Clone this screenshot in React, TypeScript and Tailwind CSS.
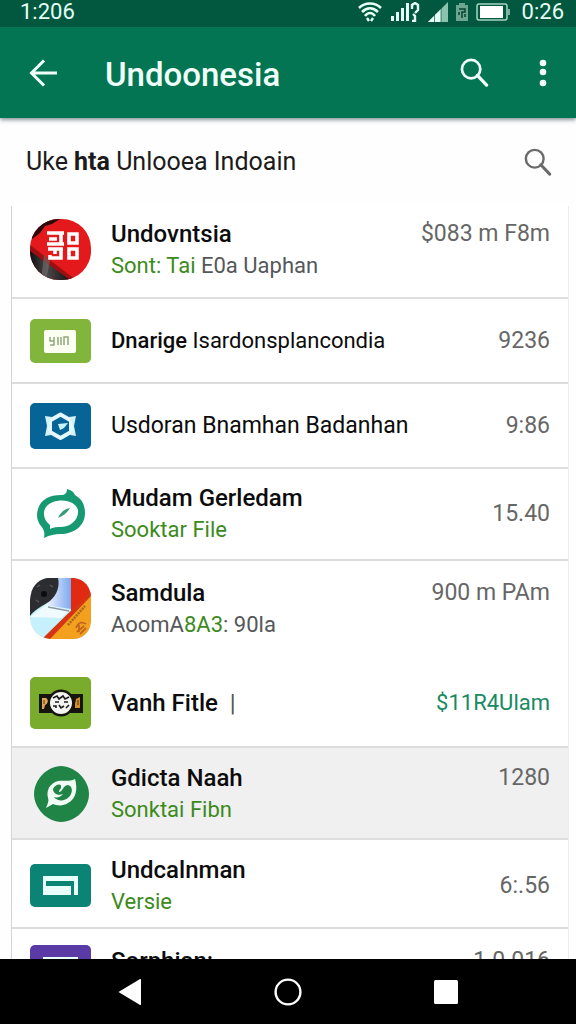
import { type ReactNode } from "react";
import clsx from "clsx";

type Part = { text: string; className?: string };

type Item = {
  id: string;
  icon: ReactNode;
  title: Part[];
  subtitle?: Part[];
  value: string;
  height: string;
  valueTop?: boolean;
  alignTop?: boolean;
  accent?: boolean;
  selected?: boolean;
  divider?: boolean;
};

const GREEN = "text-[#3c8a1c]";

const SearchIcon = ({ className, width }: { className?: string; width: number }) => (
  <svg viewBox="0 0 30 30" fill="none" stroke="currentColor" strokeWidth={width} className={className}>
    <circle cx="11.5" cy="11.5" r="9.5" />
    <path d="M18 18l9.5 10" strokeWidth={width + 0.6} strokeLinecap="round" />
  </svg>
);

const RedIcon = () => (
  <svg viewBox="0 0 61 61" className="w-[61px] h-[61px]">
    <defs>
      <clipPath id="red-clip"><rect width="61" height="61" rx="29" /></clipPath>
      <linearGradient id="red-dark" x1="0" x2="1">
        <stop offset="0" stopColor="#111" />
        <stop offset="0.4" stopColor="#4a4646" />
        <stop offset="1" stopColor="#080808" />
      </linearGradient>
    </defs>
    <g clipPath="url(#red-clip)">
      <rect width="61" height="61" fill="#e3191b" />
      <path d="M0 0H30L22 5 15 7 10 14 2 20Z" fill="#2b0a0a" />
      <path d="M0 28L44 61H0Z" fill="url(#red-dark)" />
      <path d="M0 26L46 61H40L0 32Z" fill="#9b1013" />
      <path d="M14 36L20 42 16 61H11Z" fill="#777" opacity="0.5" />
    </g>
    <g fill="none" stroke="#fff" strokeWidth="3.6">
      <path d="M17 14H34M19 20H27M17 25H34M31 14V25" />
      <path d="M39 15H47V24H39Z" />
      <path d="M18 30H33M31 30V39H20V36M25 30V35" />
      <path d="M39 30H47V39H39Z" />
    </g>
  </svg>
);

const CardIcon = () => (
  <svg viewBox="0 0 61 44" className="w-[61px] h-11">
    <rect width="61" height="44" rx="5" fill="#82b53c" />
    <rect x="14" y="11" width="32" height="23" rx="2" fill="#fbfff2" />
    <g fill="none" stroke="#93a67c" strokeWidth="1.5">
      <path d="M20 18V22H24M24 18V26H20M28 18V26M31 18V26M34 26V18H38V26" />
    </g>
  </svg>
);

const HexIcon = () => (
  <svg viewBox="0 0 61 46" className="w-[61px] h-[46px]">
    <rect width="61" height="46" rx="5" fill="#066496" />
    <path
      d="M30.500 11.500L41 17.500V29L30.500 35 20 29V17.500Z"
      fill="none"
      stroke="#e4f8ff"
      strokeWidth="4"
      strokeLinejoin="round"
    />
    <path d="M15 13L22 14 19 19 18 27 21 32 15 33 17 23Z" fill="#d3f1fb" />
    <path d="M46 13L39 14 42 19 43 27 40 32 46 33 44 23Z" fill="#d3f1fb" />
    <path d="M28 21L38 20 34 25 30 27Z" fill="#c9f3fb" />
  </svg>
);

const BubbleIcon = () => (
  <svg viewBox="0 0 61 56" className="w-[61px] h-14">
    <path
      d="M37 3C41 4 44 6 45 9C52 13 55 19 55 27C55 40 44 48 30 48C25 48 20 49 14 52C15 46 14 44 11 40C7 35 6 29 8 23C11 13 20 9 31 9C35 9 37 7 37 3Z"
      fill="#179a72"
    />
    <path
      d="M20 39C11 32 12 20 23 16C34 12 46 16 48 24C49 35 39 42 28 41C24 41 22 42 20 43Z"
      fill="#fff"
    />
    <path d="M28 32C30 27 34 23 40 22C37 27 33 30 28 32Z" fill="#3a9a78" />
  </svg>
);

const PhotoIcon = () => (
  <svg viewBox="0 0 61 61" className="w-[61px] h-[61px]">
    <defs>
      <clipPath id="photo-clip">
        <path d="M17 0H44C54 1 61 9 61 20V44C60 54 53 61 43 61H21C9 60 1 53 0 41V22C1 9 7 2 17 0Z" />
      </clipPath>
      <linearGradient id="photo-blue" x1="0" x2="1">
        <stop offset="0" stopColor="#f2f6ff" />
        <stop offset="1" stopColor="#7da9f0" />
      </linearGradient>
    </defs>
    <g clipPath="url(#photo-clip)">
      <rect width="61" height="61" fill="#c6f0fb" />
      <path d="M28 0H41V31L16 27Z" fill="url(#photo-blue)" />
      <path d="M16 27L40 32 31 40 0 39Z" fill="#effbff" />
      <path d="M18 29L39 33" stroke="#8b99a5" strokeWidth="1.5" />
      <path d="M41 0H61V18L41 33Z" fill="#e02a12" />
      <path d="M0 0H28C30 8 27 17 20 23C13 28 5 31 0 38Z" fill="#2c2d30" />
      <circle cx="14" cy="16" r="3" fill="#0c0c0d" />
      <path d="M7 9L10 7M20 7L23 9M6 22L9 24" stroke="#55575c" strokeWidth="1.5" />
      <path d="M61 15V61H15Z" fill="#f2a01e" />
      <path d="M61 13V18L20 61H12Z" fill="#d63412" />
      <path d="M38 47L55 28" stroke="#a8681a" strokeWidth="2.5" strokeDasharray="2 1" />
      <path d="M46 50C49 43 53 44 56 46M47 54L54 48M50 56L56 50M49 47V54" fill="none" stroke="#c4651d" strokeWidth="1.8" />
    </g>
  </svg>
);

const BadgeIcon = () => (
  <svg viewBox="0 0 61 52" className="w-[61px] h-[52px]">
    <rect width="61" height="52" rx="5" fill="#79ab2c" />
    <path d="M9 17H53V36H9Z" fill="#15140d" />
    <circle cx="31" cy="26" r="13.5" fill="#15140d" />
    <circle cx="31" cy="26" r="11" fill="#f4f4f2" />
    <path d="M23 21L27 19 29 22 33 19 35 22 39 20M23 29H26V31M29 28L31 31 34 29M36 31L39 28M25 25H29M34 25H38" fill="none" stroke="#1c1c1c" strokeWidth="1.6" />
    <path d="M12 21H16C19 23 18 27 15 28L14 32H12Z" fill="#e2a557" />
    <path d="M46 22L50 20V31H45V27Z" fill="#d78d2a" />
    <path d="M14 23V27M48 23V28" stroke="#533611" strokeWidth="1" />
  </svg>
);

const RoundIcon = () => (
  <svg viewBox="0 0 61 58" className="w-[61px] h-[58px]">
    <path d="M31 1C45 1 59 15 59 29C59 43 46 57 31 57C17 57 4 43 4 29C4 15 17 1 31 1Z" fill="#218447" />
    <path d="M45 14C48 24 46 34 38 38C32 42 26 40 23 39L16 43C18 38 19 36 18 33C16 25 20 18 28 16C34 15 39 17 45 14Z" fill="#f1fcf4" />
    <path d="M23 24C25 19 32 18 31 22C31 25 29 24 29 27C33 27 32 21 38 20C43 21 43 28 39 32C34 37 27 36 24 32C27 33 31 32 33 29C29 31 23 29 23 24Z" fill="#218447" />
  </svg>
);

const WindowIcon = ({ fill }: { fill: string }) => (
  <svg viewBox="0 0 61 43" className="w-[61px] h-[43px]">
    <rect width="61" height="43" rx="5" fill={fill} />
    <path d="M13 12H48V31H44V22H41V31H13Z" fill="#e9fffb" />
    <path d="M16 17H44V30H41V22H16Z" fill={fill} />
  </svg>
);

const items: Item[] = [
  {
    id: "undovnesia",
    icon: <RedIcon />,
    title: [{ text: "Undovntsia" }],
    subtitle: [{ text: "Sont: Tai", className: GREEN }, { text: " E0a Uaphan" }],
    value: "$083 m F8m",
    height: "h-[93px] pb-1",
    valueTop: true,
    divider: true,
  },
  {
    id: "dnarige",
    icon: <CardIcon />,
    title: [{ text: "Dnarige", className: "text-[22px]" }, { text: " Isardonsplancondia", className: "font-normal text-[22px]" }],
    value: "9236",
    height: "h-[85px]",
    divider: true,
  },
  {
    id: "usdoran",
    icon: <HexIcon />,
    title: [{ text: "Usdoran Bnamhan Badanhan", className: "font-normal text-[23px]" }],
    value: "9:86",
    height: "h-[85px]",
    divider: true,
  },
  {
    id: "mudam",
    icon: <BubbleIcon />,
    title: [{ text: "Mudam Gerledam" }],
    subtitle: [{ text: "Sooktar File", className: GREEN }],
    value: "15.40",
    height: "h-[92px]",
    divider: true,
  },
  {
    id: "samdula",
    icon: <PhotoIcon />,
    title: [{ text: "Samdula" }],
    subtitle: [{ text: "AoomA" }, { text: "8A3", className: GREEN }, { text: ": 90la" }],
    value: "900 m PAm",
    height: "h-[95px]",
    valueTop: true,
  },
  {
    id: "vanh",
    icon: <BadgeIcon />,
    title: [{ text: "Vanh Fitle" }, { text: "  |", className: "font-normal text-[#555] whitespace-pre" }],
    value: "$11R4Ulam",
    height: "h-[92px] pt-1",
    accent: true,
    divider: true,
  },
  {
    id: "gdicta",
    icon: <RoundIcon />,
    title: [{ text: "Gdicta Naah" }],
    subtitle: [{ text: "Sonktai Fibn", className: GREEN }],
    value: "1280",
    height: "h-[92px] pt-0.5",
    valueTop: true,
    selected: true,
    divider: true,
  },
  {
    id: "undcalnman",
    icon: <WindowIcon fill="#0b8476" />,
    title: [{ text: "Undcalnman" }],
    subtitle: [{ text: "Versie", className: GREEN }],
    value: "6:.56",
    height: "h-[89px] pt-1",
    divider: true,
  },
  {
    id: "sorphian",
    icon: <WindowIcon fill="#5a3ba6" />,
    title: [{ text: "Sorphian:" }],
    value: "1.0.016",
    height: "h-[92px] pt-4",
    alignTop: true,
  },
];

const Parts = ({ parts }: { parts: Part[] }) => (
  <>
    {parts.map((part, idx) => (
      <span key={idx} className={part.className}>{part.text}</span>
    ))}
  </>
);

const Row = ({ item }: { item: Item }) => (
  <li
    className={clsx(
      "flex gap-5 px-[18px] shrink-0",
      item.height,
      item.alignTop ? "items-start" : "items-center",
      item.divider && "border-b-2 border-[#dcdddd]",
      item.selected && "bg-[#f0f0f0]"
    )}
  >
    <div className="shrink-0">{item.icon}</div>
    <div
      className={clsx("flex-1 min-w-0 flex gap-2 justify-between", item.valueTop ? "items-start" : "items-center")}
    >
      <div className="whitespace-nowrap">
        <p className="text-[24px] leading-8 font-medium text-[#0c0c0c]"><Parts parts={item.title} /></p>
        {item.subtitle && (
          <p className="text-[22px] leading-8 text-[#55585a]"><Parts parts={item.subtitle} /></p>
        )}
      </div>
      <span
        className={clsx(
          "leading-8 whitespace-nowrap",
          item.accent ? "text-[22px] text-[#188a62]" : "text-[23px] text-[#666]"
        )}
      >
        {item.value}
      </span>
    </div>
  </li>
);

const StatusBar = () => (
  <div className="h-[27px] shrink-0 bg-[#02583f] text-[#e6fff6] flex items-center justify-between pl-5 pr-3 pb-1 text-[22px] leading-6">
    <span>1:206</span>
    <div className="flex items-center gap-2">
      <svg viewBox="0 0 24 20" className="w-6 h-5" fill="none" stroke="currentColor" strokeWidth="2.6">
        <path d="M1 6C7 0 17 0 23 6M4 10C9 5 15 5 20 10M7 14C10 10 14 10 17 14" />
        <path d="M9 16L11 19M13 19L15 16" strokeWidth="2.4" />
      </svg>
      <svg viewBox="0 0 30 20" className="w-[30px] h-5" fill="currentColor">
        <path d="M1 14H4V19H1ZM6 10H9V19H6ZM11 6H14V19H11ZM16 1H19V19H16Z" />
        <path d="M22 7V3L25 1 28 3V8L25 11M23 12L25 14V19H22" fill="none" stroke="currentColor" strokeWidth="2.4" />
      </svg>
      <svg viewBox="0 0 20 20" className="w-5 h-5">
        <path d="M20 0V20H0Z" fill="#8dc2ae" />
        <path d="M13 7V20H0Z" fill="#e6fff6" />
        <path d="M6.500 12V20M13 6V20" stroke="#02583f" strokeWidth="0.700" />
      </svg>
      <svg viewBox="0 0 12 18" className="w-3 h-[18px]">
        <path d="M0 2H3V0H9V2H12V18H0Z" fill="#6ea591" />
        <path d="M3 6H9V9H6V15M3 9V12M9 11V14" fill="none" stroke="#06442f" strokeWidth="1.500" />
      </svg>
      <svg viewBox="0 0 34 18" className="w-[34px] h-[18px]">
        <rect x="1" y="1" width="30" height="16" rx="2" fill="none" stroke="#a8d3c4" strokeWidth="1.500" />
        <rect x="4" y="3" width="23" height="12" fill="#fff" />
        <path d="M32 6H34V12H32Z" fill="#7bb09e" />
      </svg>
      <span className="pl-1">0:26</span>
    </div>
  </div>
);

const App = () => {
  return (
    <div className="h-screen flex flex-col overflow-hidden bg-[#fefefe] font-['Roboto',sans-serif]">
      <StatusBar />

      {/* App bar */}
      <header className="h-[91px] shrink-0 bg-[#047552] text-[#f0fffa] flex items-center pl-[29px] pr-[29px] shadow-[0_2px_4px_rgba(60,80,90,0.6)]">
        <button type="button" aria-label="Back" className="cursor-pointer">
          <svg viewBox="0 0 28 28" className="w-7 h-7" fill="none" stroke="currentColor" strokeWidth="3">
            <path d="M15 1.500L2.500 14 15 26.500M2.500 14H28" />
          </svg>
        </button>
        <h1 className="flex-1 pl-12 pt-1 text-[33px] leading-10 font-medium">Undoonesia</h1>
        <button type="button" aria-label="Search" className="cursor-pointer mr-[50px]">
          <SearchIcon className="w-[29px] h-[29px]" width={2.8} />
        </button>
        <button type="button" aria-label="More options" className="cursor-pointer">
          <svg viewBox="0 0 8 28" className="w-2 h-7" fill="currentColor">
            <circle cx="4" cy="4" r="3.300" />
            <circle cx="4" cy="13" r="3.300" />
            <circle cx="4" cy="24" r="3.300" />
          </svg>
        </button>
      </header>

      {/* Search line */}
      <div className="h-[88px] shrink-0 flex items-center justify-between pl-[26px] pr-6 text-[#1b1b1b]">
        <p className="text-[25px] leading-8">
          Uke <b className="font-bold">hta</b> Unlooea Indoain
        </p>
        <button type="button" aria-label="Search list" className="cursor-pointer text-[#6a6a6a]">
          <SearchIcon className="w-7 h-7" width={2.6} />
        </button>
      </div>

      {/* List */}
      <ul className="flex-1 min-h-0 overflow-hidden flex flex-col ml-[11px] mr-[7px] bg-white border-x border-l-[#d4d6d6] border-r-[#ececee]">
        {items.map((item) => (
          <Row key={item.id} item={item} />
        ))}
      </ul>

      {/* Navigation bar */}
      <nav className="h-[65px] shrink-0 bg-black text-white flex items-center justify-center gap-[132px]">
        <button type="button" aria-label="Go back" className="cursor-pointer">
          <svg viewBox="0 0 24 28" className="w-6 h-7" fill="currentColor">
            <path d="M0.500 14L22 1Q23 0.500 23 2V26Q23 27.500 22 27Z" />
          </svg>
        </button>
        <button type="button" aria-label="Home" className="cursor-pointer">
          <svg viewBox="0 0 28 28" className="w-7 h-7" fill="none" stroke="currentColor" strokeWidth="2.400">
            <circle cx="14" cy="14" r="12.400" />
          </svg>
        </button>
        <button type="button" aria-label="Recent apps" className="cursor-pointer">
          <svg viewBox="0 0 24 24" className="w-6 h-6" fill="currentColor">
            <rect width="24" height="24" rx="1.500" />
          </svg>
        </button>
      </nav>
    </div>
  );
};

export default App;
